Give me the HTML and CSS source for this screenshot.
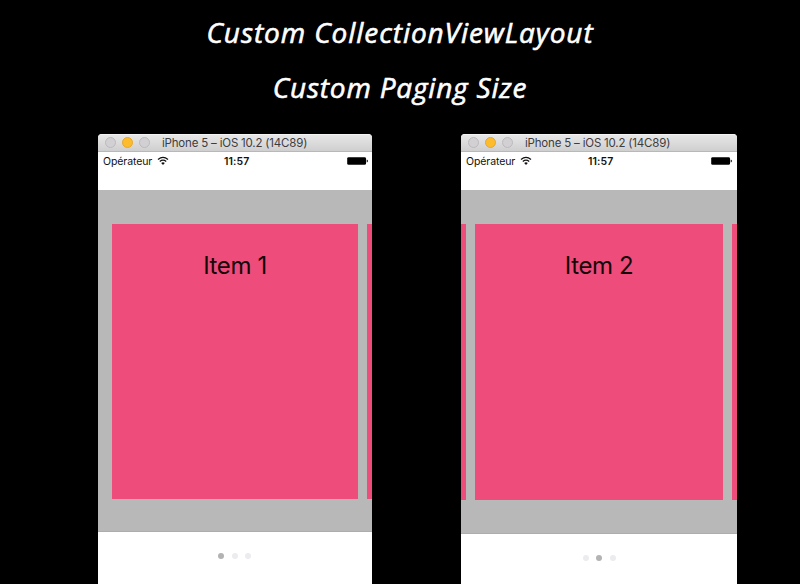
FILE: index.html
```html
<!DOCTYPE html>
<html lang="en">
<head>
<meta charset="utf-8">
<title>Custom CollectionViewLayout</title>
<link rel="stylesheet" href="styles.css">
</head>
<body>
<header>
  <h1>Custom CollectionViewLayout</h1>
  <h2>Custom Paging Size</h2>
</header>
<main>
  <section class="window first">
    <div class="titlebar"><i class="light"></i><i class="light amber"></i><i class="light"></i><span class="name">iPhone 5 – iOS 10.2 (14C89)</span></div>
    <div class="status">
      <span class="carrier">Opérateur</span>
      <svg class="wifi" viewBox="0 0 12 9"><path d="M1 3.4Q6-.8 11 3.4M2.8 5.4Q6 2.9 9.2 5.4" fill="none" stroke="#111" stroke-width="1.3"/><path d="M4.2 7Q6 5.6 7.8 7L6 8.9Z" fill="#111"/></svg>
      <span class="time">11:57</span>
      <svg class="battery" viewBox="0 0 21 8"><rect x=".2" y=".2" width="18.8" height="7.6" rx="1.4"/><path d="M19.7 2.4q1.2.4 1.2 1.6t-1.2 1.6z"/></svg>
    </div>
    <div class="pages"><div class="card main"><span>Item 1</span></div><div class="card next"></div></div>
    <div class="dots"><i class="on"></i><i></i><i></i></div>
  </section>
  <section class="window second">
    <div class="titlebar"><i class="light"></i><i class="light amber"></i><i class="light"></i><span class="name">iPhone 5 – iOS 10.2 (14C89)</span></div>
    <div class="status">
      <span class="carrier">Opérateur</span>
      <svg class="wifi" viewBox="0 0 12 9"><path d="M1 3.4Q6-.8 11 3.4M2.8 5.4Q6 2.9 9.2 5.4" fill="none" stroke="#111" stroke-width="1.3"/><path d="M4.2 7Q6 5.6 7.8 7L6 8.9Z" fill="#111"/></svg>
      <span class="time">11:57</span>
      <svg class="battery" viewBox="0 0 21 8"><rect x=".2" y=".2" width="18.8" height="7.6" rx="1.4"/><path d="M19.7 2.4q1.2.4 1.2 1.6t-1.2 1.6z"/></svg>
    </div>
    <div class="pages"><div class="card prev"></div><div class="card main"><span>Item 2</span></div><div class="card next"></div></div>
    <div class="dots"><i></i><i class="on"></i><i></i></div>
  </section>
</main>
</body>
</html>
```
FILE: styles.css
```css
* { box-sizing: border-box; }
body { margin: 0; width: 800px; height: 584px; overflow: hidden; background: #000; font-family: Inter, "Liberation Sans", sans-serif; }
header { height: 133.5px; padding-top: 5px; text-align: center; color: #fff; }
h1, h2 { margin: 0; font: italic 500 28px/55px "Open Sans", sans-serif; letter-spacing: .92px; -webkit-text-stroke: .6px #fff; white-space: nowrap; }
h2 { letter-spacing: .8px; }
main { display: flex; height: 450.5px; padding-left: 98px; gap: 89px; }
.window { flex: none; width: 274px; display: flex; flex-direction: column; background: #fff; border-radius: 4px 4px 0 0; overflow: hidden; }
.second { width: 275.5px; }
.titlebar { flex: none; height: 18.5px; display: flex; align-items: center; padding: 0 0 0 6.5px; gap: 6px; background: linear-gradient(#e8e7e8, #d0cfd0); border-top: 1px solid #f3f3f3; border-bottom: 1px solid #b9b8b9; }
.light { flex: none; width: 11px; height: 11px; border-radius: 50%; background: #d2d0d3; border: 1px solid #bbb9bc; }
.amber { background: #fdbc2e; border-color: #e5a72d; }
.name { margin-left: 6.5px; padding-top: 1px; font-size: 11.5px; line-height: 15px; letter-spacing: -.19px; color: #3d3c3e; white-space: nowrap; }
.status { flex: none; height: 38px; display: flex; padding: 2px 4.5px 0 5px; font-size: 10.5px; line-height: 15px; color: #111; }
.carrier { width: 53.5px; white-space: nowrap; letter-spacing: -.1px; }
.wifi { width: 12px; height: 9px; margin-top: 2px; }
.time { font-weight: 600; margin-left: 55.5px; letter-spacing: .1px; white-space: nowrap; }
.second .time { margin-left: 56.5px; }
.battery { width: 21px; height: 8px; margin: 3px 0 0 auto; }
.pages { flex: none; height: 342px; display: flex; padding: 33.5px 0 0 14px; background: #b8b8b8; border-bottom: 1px solid #adadad; overflow: hidden; }
.card { flex: none; height: 275px; background: #ee4c7a; }
.main { width: 246px; text-align: center; padding-top: 24px; font-size: 24px; line-height: 36px; letter-spacing: -.4px; color: #140609; }
.next { width: 10px; margin-left: 8.5px; }
.second .pages { height: 343.5px; padding-left: 0; }
.second .card { height: 276.5px; }
.prev { width: 5px; margin-right: 9px; }
.second .main { width: 248px; }
.dots { display: flex; gap: 7.7px; padding: 21px 0 0 120px; }
.dots i { width: 6px; height: 6px; border-radius: 50%; background: #ececf0; }
.dots .on { background: #b3b3b3; }
.second .dots { padding-left: 121.5px; }
```
